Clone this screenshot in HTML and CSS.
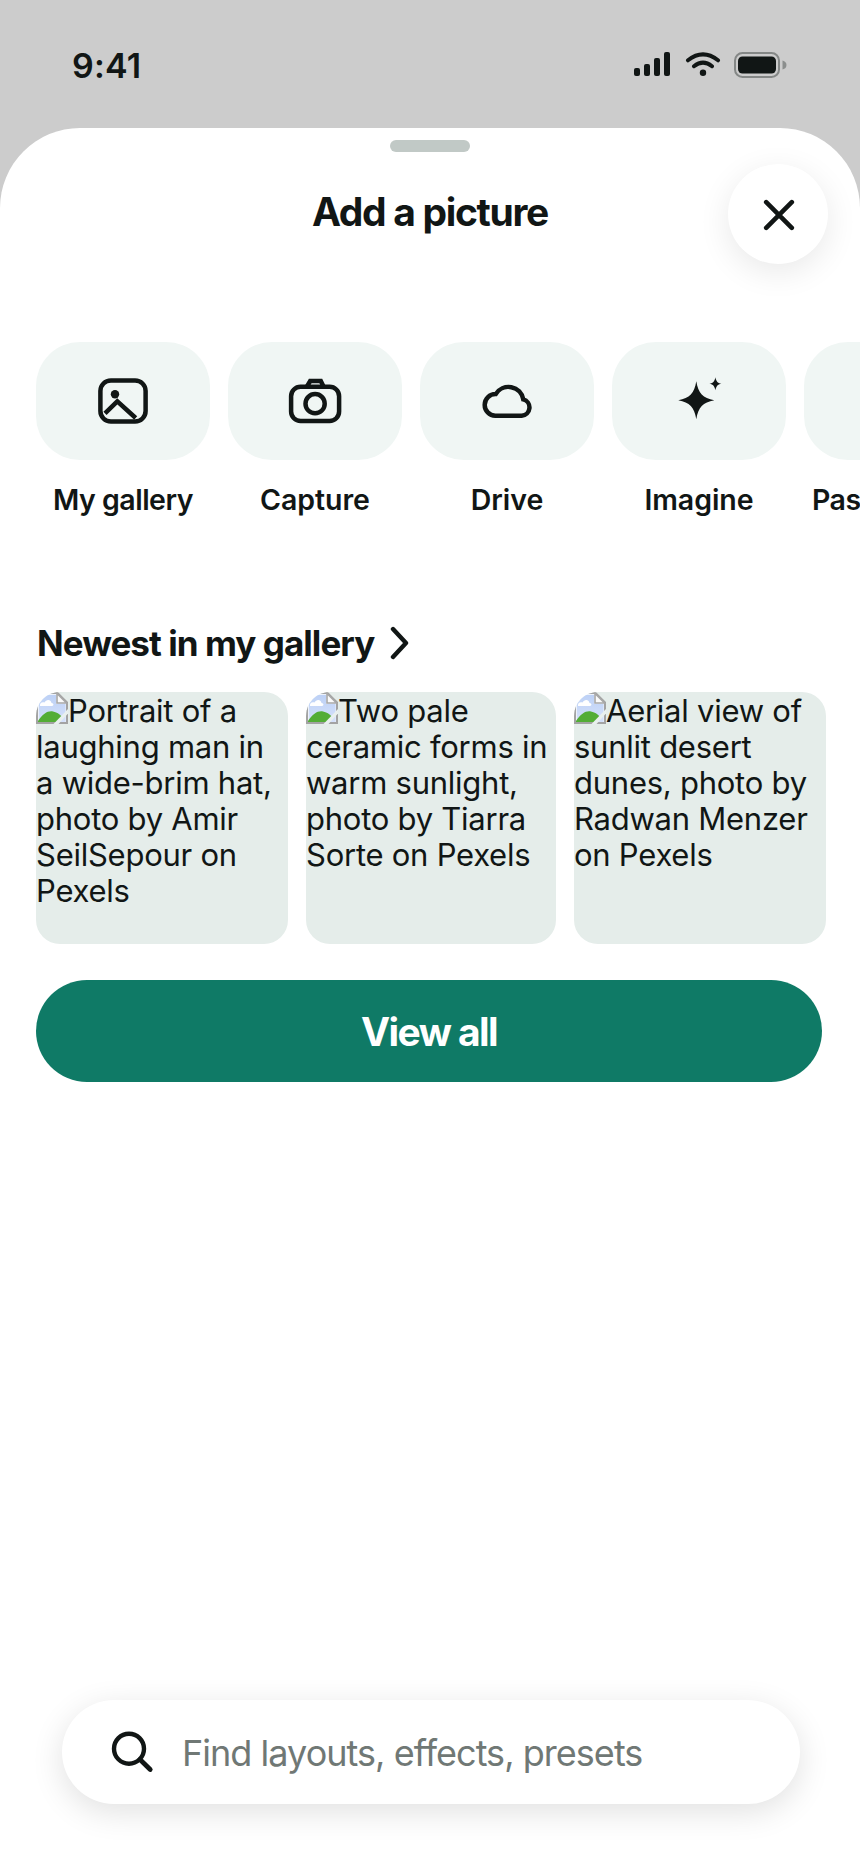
FILE: index.html
```html
<!DOCTYPE html>
<html lang="en">
<head>
<meta charset="utf-8">
<title>Add a picture</title>
<link rel="stylesheet" href="styles.css">
</head>
<body>
<svg class="defs" aria-hidden="true">
  <linearGradient id="sky" x1="0" y1="0" x2="0" y2="1"><stop offset="0" stop-color="#bdd1f6"/><stop offset="1" stop-color="#d5e1fa"/></linearGradient>
  <symbol id="broken" viewBox="0 0 32 32">
    <path d="M1 1H21.5L31 10.500V31H1Z" fill="#eef3fb" stroke="#a3a3a3" stroke-width="2"/>
    <path d="M3 3H20V12H29.500V30H3Z" fill="url(#sky)"/>
    <path d="M4 14C3.500 11 6 9.500 8.500 10.500C10 7 15 7 15.500 11C18 11 18 14 16 14Z" fill="#fff"/>
    <path d="M2 29C7 21.500 12 18.500 17 19.500C20 20 24 22 26 25L22 30H2Z" fill="#53ad36"/>
    <path d="M21 1.500V11H30.500Z" fill="#fbfbfb" stroke="#a8a8a8" stroke-width="1.600"/>
    <path d="M32 17V21.500L22.500 32H17.500Z" fill="#e9f0ee"/>
  </symbol>
</svg>

<header class="status">
  <span class="time">9:41</span>
  <svg class="status-icons" viewBox="0 0 154 28" aria-hidden="true">
    <g fill="#111615">
      <rect x="0" y="18" width="6" height="8" rx="2"/>
      <rect x="10" y="14" width="6" height="12" rx="2"/>
      <rect x="20" y="8" width="6" height="18" rx="2"/>
      <rect x="30" y="2" width="6" height="24" rx="2"/>
      <circle cx="69" cy="22.700" r="3.200"/>
      <rect x="104" y="6.500" width="38" height="17" rx="4.500"/>
    </g>
    <path d="M54 10.300Q69-1.600 84 10.300M60 16.200Q69 9 78 16.200" fill="none" stroke="#111615" stroke-width="4" stroke-linecap="round"/>
    <rect x="101" y="3" width="44" height="24" rx="7.500" fill="none" stroke="#848786" stroke-width="2"/>
    <path d="M148.500 10.500Q152.500 11.500 152.500 15T148.500 19.500Z" fill="#8b8e8d"/>
  </svg>
</header>

<main class="sheet">
  <div class="grabber"></div>
  <div class="titlebar">
    <h1 class="title">Add a picture</h1>
    <button class="close" aria-label="Close">
      <svg class="close-icon" viewBox="0 0 32 32"><path d="M3.200 3.200L28.800 28.800M28.800 3.200L3.200 28.800" fill="none" stroke="#111615" stroke-width="4.600" stroke-linecap="round"/></svg>
    </button>
  </div>

  <nav class="sources">
    <a class="source">
      <span class="tile"><svg class="icon" viewBox="0 0 56 56"><rect x="5.400" y="7.400" width="45.200" height="41.200" rx="10.500"/><circle class="solid" cx="20" cy="21.300" r="4.200"/><path d="M10 40.300L22.300 28.300L40.700 45"/></svg></span>
      <span class="label tight">My gallery</span>
    </a>
    <a class="source">
      <span class="tile"><svg class="icon" viewBox="0 0 56 56"><rect x="4.100" y="13.700" width="48" height="34.300" rx="9.500"/><path d="M20 13.500L23.200 8H33.800L36.500 13.500"/><circle cx="28.100" cy="30.700" r="9.600"/></svg></span>
      <span class="label">Capture</span>
    </a>
    <a class="source">
      <span class="tile"><svg class="icon" viewBox="0 0 56 56"><path d="M16.300 42.700A10.800 10.800 0 0 1 16.700 21.100A15 15 0 0 1 44.300 26.400A8.300 8.300 0 0 1 42.700 42.700Z"/></svg></span>
      <span class="label">Drive</span>
    </a>
    <a class="source">
      <span class="tile"><svg class="icon" viewBox="0 0 56 56"><path class="solid" d="M25.300 8.300C27.300 20.300 31.800 25.100 43.300 27.300C31.800 29.500 27.300 34.300 25.300 46.300C23.300 34.300 18.800 29.500 7.300 27.300C18.800 25.100 23.300 20.300 25.300 8.300Z"/><path class="solid" d="M44.400 4.200C45.200 8.300 46.400 9.800 50.400 10.700C46.400 11.600 45.200 13.100 44.400 17.200C43.600 13.100 42.400 11.600 38.400 10.700C42.400 9.800 43.600 8.300 44.400 4.200Z"/></svg></span>
      <span class="label">Imagine</span>
    </a>
    <a class="source">
      <span class="tile"></span>
      <span class="label tight">Paste photo</span>
    </a>
  </nav>

  <section class="gallery">
    <h2 class="heading">Newest in my gallery
      <svg class="chevron" viewBox="0 0 20 34"><path d="M3 3L16 17L3 31" fill="none" stroke="#111615" stroke-width="4.400" stroke-linecap="round" stroke-linejoin="round"/></svg>
    </h2>
    <div class="thumbs">
      <figure class="thumb"><svg class="broken"><use href="#broken"/></svg>Portrait of a<br>laughing man in<br>a wide-brim hat,<br>photo by Amir<br>SeilSepour on<br>Pexels</figure>
      <figure class="thumb"><svg class="broken"><use href="#broken"/></svg>Two pale<br>ceramic forms in<br>warm sunlight,<br>photo by Tiarra<br>Sorte on Pexels</figure>
      <figure class="thumb"><svg class="broken"><use href="#broken"/></svg>Aerial view of<br>sunlit desert<br>dunes, photo by<br>Radwan Menzer<br>on Pexels</figure>
    </div>
    <button class="view-all">View all</button>
  </section>

  <div class="search">
    <svg class="search-icon" viewBox="0 0 44 44"><circle cx="19" cy="18.700" r="15" fill="none" stroke="#111615" stroke-width="4.400"/><path d="M30 29.500L40.200 39.500" stroke="#111615" stroke-width="4.800" stroke-linecap="round"/></svg>
    <span class="placeholder">Find layouts, effects, presets</span>
  </div>
</main>
</body>
</html>
```

FILE: styles.css
```css
* { box-sizing: border-box; }

body {
  margin: 0;
  height: 1864px;
  display: flex;
  flex-direction: column;
  overflow: hidden;
  background: #ccc;
  color: #111615;
  font-family: Inter, sans-serif;
}

button { border: 0; padding: 0; font: inherit; color: inherit; }
h1, h2, figure { margin: 0; }
.defs { position: absolute; width: 0; height: 0; }

.status {
  height: 128px;
  flex: none;
  display: flex;
  justify-content: space-between;
  align-items: flex-start;
  padding: 45px 72px 0;
}
.time { font-size: 34px; line-height: 42px; font-weight: 600; letter-spacing: 0.2px; }
.status-icons { width: 154px; height: 28px; margin-top: 5px; }

.sheet {
  flex: 1;
  display: flex;
  flex-direction: column;
  align-items: stretch;
  padding-bottom: 60px;
  background: #fff;
  border-radius: 80px 80px 0 0;
  overflow: hidden;
}
.grabber {
  width: 80px;
  height: 12px;
  flex: none;
  margin: 12px auto;
  border-radius: 6px;
  background: #c1c9c6;
}

.titlebar {
  display: grid;
  grid-template-columns: 100px 1fr 100px;
  align-items: center;
  height: 100px;
  padding: 0 32px;
}
.title {
  grid-column: 2;
  padding-bottom: 4px;
  text-align: center;
  font-size: 39px;
  line-height: 48px;
  font-weight: 700;
  letter-spacing: -1.33px;
}
.close {
  display: flex;
  align-items: center;
  justify-content: center;
  width: 100px;
  height: 100px;
  border-radius: 50%;
  background: #fff;
  box-shadow: 0 8px 32px rgba(0, 0, 0, 0.09);
}
.close-icon { width: 32px; height: 32px; margin: 2px 0 0 2px; }

.sources { display: flex; gap: 18px; padding: 78px 0 0 36px; }
.source {
  flex: none;
  width: 174px;
  display: flex;
  flex-direction: column;
  align-items: center;
  gap: 22px;
}
.tile {
  display: flex;
  align-items: center;
  justify-content: center;
  width: 174px;
  height: 118px;
  border-radius: 44px;
  background: #f0f6f4;
}
.icon {
  width: 56px;
  height: 56px;
  fill: none;
  stroke: #111615;
  stroke-width: 4.5;
}
.solid { fill: #111615; stroke: none; }
.label {
  font-size: 28.5px;
  line-height: 36px;
  font-weight: 600;
  letter-spacing: -0.05px;
  white-space: nowrap;
}
.tight { letter-spacing: -0.5px; }

.gallery { padding: 103px 34px 0 36px; }
.heading {
  display: flex;
  align-items: center;
  gap: 16px;
  height: 44px;
  padding-left: 1px;
  font-size: 35px;
  line-height: 44px;
  font-weight: 700;
  letter-spacing: -0.95px;
}
.chevron { width: 20px; height: 34px; }
.thumbs {
  display: grid;
  grid-template-columns: 252px 250px 252px;
  gap: 18px;
  margin-top: 27px;
}
.thumb {
  height: 252px;
  overflow: hidden;
  padding-top: 1px;
  border-radius: 24px;
  background: #e5edea;
  font-size: 31px;
  line-height: 36px;
  letter-spacing: -0.25px;
  white-space: nowrap;
}
.broken { width: 32px; height: 32px; margin-top: -1px; vertical-align: top; }
.view-all {
  display: block;
  width: 786px;
  height: 102px;
  margin-top: 36px;
  padding-top: 2px;
  border-radius: 51px;
  background: #0f7a66;
  color: #fff;
  font-size: 39px;
  line-height: 48px;
  font-weight: 700;
  letter-spacing: -1.55px;
}

.search {
  display: flex;
  align-items: center;
  gap: 28px;
  height: 104px;
  flex: none;
  margin: auto 60px 0 62px;
  padding-left: 48px;
  border-radius: 52px;
  background: #fff;
  box-shadow: 0 8px 32px rgba(0, 0, 0, 0.12);
}
.search-icon { width: 44px; height: 44px; }
.placeholder {
  font-size: 36px;
  line-height: 44px;
  letter-spacing: -0.96px;
  color: #707875;
  padding-top: 1px;
}
```
